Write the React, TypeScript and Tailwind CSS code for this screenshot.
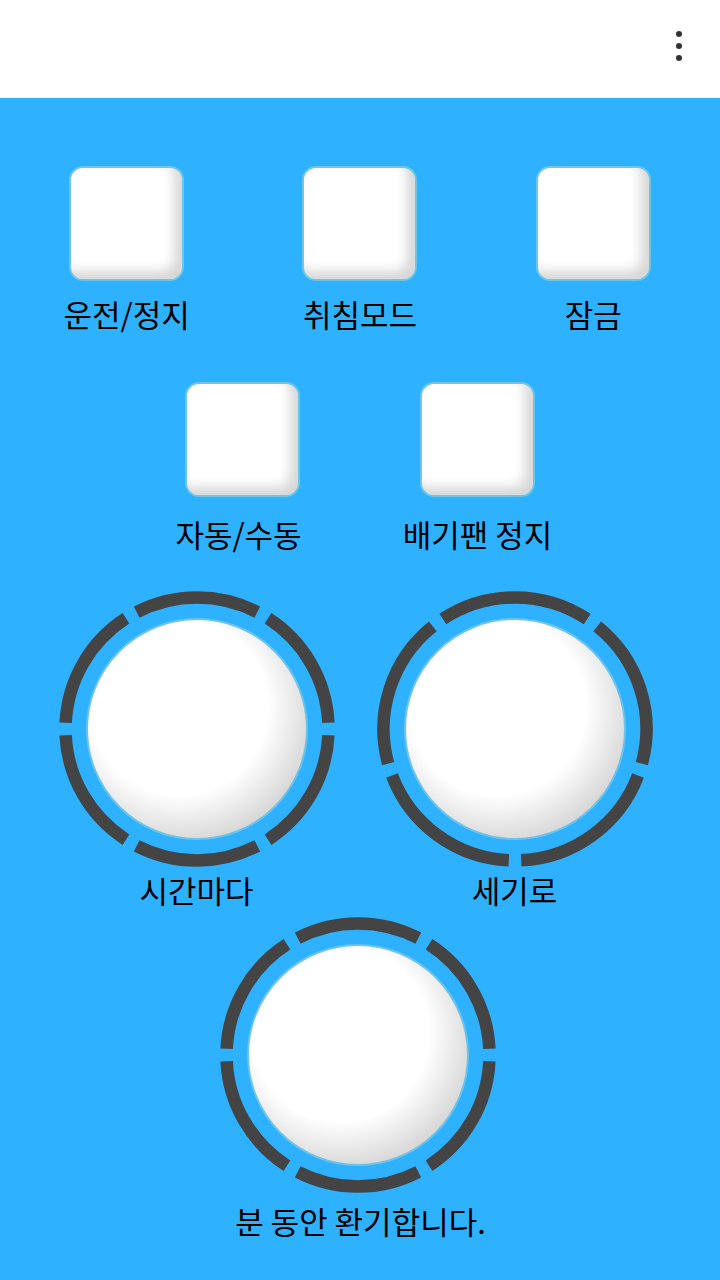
const FONT = { fontFamily: '"Noto Sans CJK KR", "Noto Sans", sans-serif' };

const SquareButton = ({ label, mt }: { label: string; mt: string }) => (
  <div className="flex flex-col items-center">
    <div className="w-[115px] h-[115px] rounded-[14px] border-2 border-[#6fc6e4] bg-white shadow-[inset_-8px_-8px_12px_rgba(0,0,0,0.16)]" />
    <span className={`${mt} text-[31px] leading-[38px] text-black whitespace-nowrap`}>{label}</span>
  </div>
);

const Ring = ({ segments, offset }: { segments: number; offset: number }) => {
  const c = 138;
  const r = 131.5;
  const half = 2.7;
  const step = 360 / segments;
  const pt = (deg: number) => {
    const a = (deg * Math.PI) / 180;
    return `${(c + r * Math.cos(a)).toFixed(2)} ${(c + r * Math.sin(a)).toFixed(2)}`;
  };
  const arcs = Array.from({ length: segments }, (_, i) => {
    const s = offset + i * step + half;
    const e = offset + (i + 1) * step - half;
    return `M ${pt(s)} A ${r} ${r} 0 0 1 ${pt(e)}`;
  });
  return (
    <svg width="276" height="276" viewBox="0 0 276 276" className="absolute inset-0">
      {arcs.map((d, i) => (
        <path key={i} d={d} fill="none" stroke="#444444" strokeWidth="12.5" />
      ))}
    </svg>
  );
};

const Dial = ({ segments, offset }: { segments: number; offset: number }) => (
  <div className="relative w-[276px] h-[276px] flex items-center justify-center">
    <Ring segments={segments} offset={offset} />
    <div className="w-[222px] h-[222px] rounded-full border-[2.5px] border-[#6fc4e6] bg-[radial-gradient(circle_at_42%_40%,#ffffff_0,#ffffff_88px,#d4d4d4_140px)]" />
  </div>
);

export default function App() {
  return (
    <div className="w-[720px] h-[1280px] flex flex-col bg-[#2eb1ff]" style={FONT}>
      <header className="h-[98px] bg-white flex items-start justify-end pr-[38px] pt-[31px] shrink-0">
        <div className="flex flex-col gap-[6px]">
          <span className="w-[6px] h-[6px] rounded-full bg-[#333333]" />
          <span className="w-[6px] h-[6px] rounded-full bg-[#333333]" />
          <span className="w-[6px] h-[6px] rounded-full bg-[#333333]" />
        </div>
      </header>

      <main className="flex-1 flex flex-col">
        <div className="grid grid-cols-3 px-[10px] mt-[68px]">
          <SquareButton label="운전/정지" mt="mt-[14px]" />
          <SquareButton label="취침모드" mt="mt-[14px]" />
          <SquareButton label="잠금" mt="mt-[14px]" />
        </div>

        <div className="flex justify-center mt-[49px]">
          <div className="w-[235px]">
            <SquareButton label="자동/수동" mt="mt-[18px] mr-[8px]" />
          </div>
          <div className="w-[235px]">
            <SquareButton label="배기팬 정지" mt="mt-[18px]" />
          </div>
        </div>

        <div className="flex justify-center gap-[42px] pr-[9px] mt-[38px]">
          <div className="flex flex-col items-center">
            <Dial segments={6} offset={0} />
            <span className="mt-[4px] text-[31px] leading-[38px] text-black">시간마다</span>
          </div>
          <div className="flex flex-col items-center">
            <Dial segments={5} offset={90} />
            <span className="mt-[4px] text-[31px] leading-[38px] text-black">세기로</span>
          </div>
        </div>

        <div className="flex flex-col items-center mt-[8px] pr-[5px]">
          <Dial segments={6} offset={0} />
          <span className="mt-[9px] pl-[6px] text-[31px] leading-[38px] text-black">분 동안 환기합니다.</span>
        </div>
      </main>
    </div>
  );
}
